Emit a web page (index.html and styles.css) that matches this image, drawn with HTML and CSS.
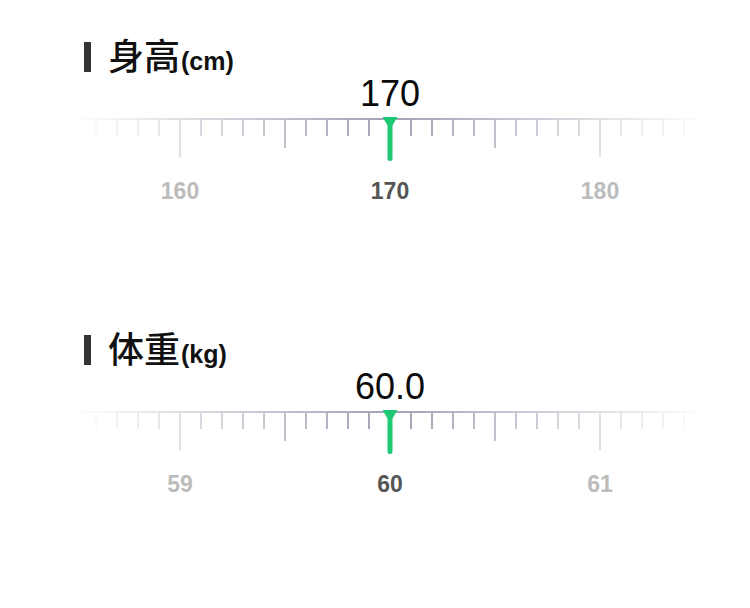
FILE: index.html
```html
<!DOCTYPE html>
<html lang="zh">
<head>
<meta charset="utf-8">
<title>身高体重</title>
<link rel="stylesheet" href="styles.css">
</head>
<body>
<div class="page">
  <section class="group">
    <div class="title"><span class="bar"></span><span class="text"><span class="name">身高</span><span class="unit">(cm)</span></span></div>
    <div class="scale">
      <div class="value">170</div>
      <div class="ruler">
        <div class="ticks">
          <i class="t m"></i><i class="t"></i><i class="t"></i><i class="t"></i><i class="t"></i>
          <i class="t l"></i><i class="t"></i><i class="t"></i><i class="t"></i><i class="t"></i>
          <i class="t m"></i><i class="t"></i><i class="t"></i><i class="t"></i><i class="t"></i>
          <i class="t l"></i><i class="t"></i><i class="t"></i><i class="t"></i><i class="t"></i>
          <i class="t m"></i><i class="t"></i><i class="t"></i><i class="t"></i><i class="t"></i>
          <i class="t l"></i><i class="t"></i><i class="t"></i><i class="t"></i><i class="t"></i>
          <i class="t m"></i>
        </div>
        <svg class="pointer" width="16" height="44" viewBox="0 0 16 44"><polygon points="0.5,0 15.5,0 10.5,8.5 5.5,8.5" fill="#1fc974"/><rect x="5.5" y="0" width="5" height="44" rx="2.5" fill="#1fc974"/></svg>
      </div>
      <div class="labels"><span>160</span><span class="cur">170</span><span>180</span></div>
    </div>
  </section>
  <section class="group">
    <div class="title"><span class="bar"></span><span class="text"><span class="name">体重</span><span class="unit">(kg)</span></span></div>
    <div class="scale">
      <div class="value">60.0</div>
      <div class="ruler">
        <div class="ticks">
          <i class="t m"></i><i class="t"></i><i class="t"></i><i class="t"></i><i class="t"></i>
          <i class="t l"></i><i class="t"></i><i class="t"></i><i class="t"></i><i class="t"></i>
          <i class="t m"></i><i class="t"></i><i class="t"></i><i class="t"></i><i class="t"></i>
          <i class="t l"></i><i class="t"></i><i class="t"></i><i class="t"></i><i class="t"></i>
          <i class="t m"></i><i class="t"></i><i class="t"></i><i class="t"></i><i class="t"></i>
          <i class="t l"></i><i class="t"></i><i class="t"></i><i class="t"></i><i class="t"></i>
          <i class="t m"></i>
        </div>
        <svg class="pointer" width="16" height="44" viewBox="0 0 16 44"><polygon points="0.5,0 15.5,0 10.5,8.5 5.5,8.5" fill="#1fc974"/><rect x="5.5" y="0" width="5" height="44" rx="2.5" fill="#1fc974"/></svg>
      </div>
      <div class="labels"><span>59</span><span class="cur">60</span><span>61</span></div>
    </div>
  </section>
</div>
</body>
</html>
```

FILE: styles.css
```css
* { box-sizing: border-box; }
html, body { margin: 0; padding: 0; background: #fff; }
body {
  font-family: "Liberation Sans", "Noto Sans CJK SC", sans-serif;
  color: #111;
  width: 750px;
  height: 608px;
  overflow: hidden;
}
.group {
  height: 293px;
  padding-top: 40px;
}
.title {
  height: 34px;
  display: flex;
  align-items: center;
  padding-left: 84px;
}
.bar {
  width: 7px;
  height: 30px;
  background: #333338;
  margin-right: 17px;
}
.text {
  display: flex;
  align-items: baseline;
  line-height: 34px;
  color: #111;
}
.name {
  font-family: "Noto Sans CJK SC", sans-serif;
  font-size: 36px;
  font-weight: 500;
}
.unit {
  font-family: "Liberation Sans", sans-serif;
  font-size: 25px;
  font-weight: 700;
  margin-left: 1px;
}
.scale {
  margin-left: 75px;
  width: 630px;
}
.value {
  text-align: center;
  font-size: 36px;
  line-height: 40px;
  color: #0a0a0a;
}
.ruler {
  position: relative;
  margin-top: 4px;
  margin-left: -1px;
  width: 632px;
}
.ticks {
  display: flex;
  justify-content: space-between;
  align-items: flex-start;
  height: 39px;
  border-top: 2px solid #9ea2b3;
  -webkit-mask-image: linear-gradient(to right, rgba(0,0,0,0) 0%, #000 50%, rgba(0,0,0,0) 100%);
  mask-image: linear-gradient(to right, rgba(0,0,0,0) 0%, #000 50%, rgba(0,0,0,0) 100%);
}
.t {
  display: block;
  width: 2px;
  height: 16px;
  background: #9ea2b3;
}
.t.m { height: 28px; }
.t.l { height: 37px; }
.pointer {
  position: absolute;
  left: 308px;
  top: -1px;
}
.labels {
  display: flex;
  margin-top: 22px;
}
.labels span {
  flex: 1;
  text-align: center;
  font-size: 23px;
  line-height: 24px;
  font-weight: 700;
  color: #bcbcbc;
}
.labels .cur { color: #555; }
```
